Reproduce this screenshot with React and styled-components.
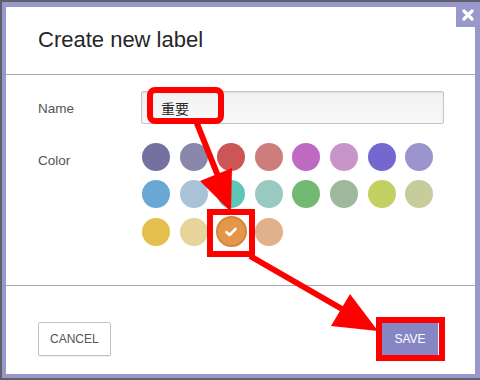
import React from "react";
import styled, { createGlobalStyle } from "styled-components";

const Global = createGlobalStyle`
  html, body { margin: 0; padding: 0; }
  body {
    background: #5f5f6c;
    font-family: "Liberation Sans", Arial, sans-serif;
    width: 480px;
    height: 380px;
    overflow: hidden;
  }
`;

const Page = styled.div`
  position: relative;
  width: 480px;
  height: 380px;
  padding-top: 2px;
  padding-left: 2px;
  box-sizing: border-box;
`;

const Frame = styled.div`
  position: relative;
  width: 478px;
  height: 376px;
  box-sizing: border-box;
  background: #9898cb;
  padding: 5px 5px 4px 4px;
`;

const Dialog = styled.div`
  background: #fff;
  height: 100%;
  display: flex;
  flex-direction: column;
`;

const CloseBox = styled.button`
  position: absolute;
  top: 0;
  right: 0;
  width: 24px;
  height: 25px;
  border: none;
  padding: 0;
  background: #9898cb;
  display: flex;
  align-items: center;
  justify-content: center;
`;

const Header = styled.div`
  height: 68px;
  display: flex;
  align-items: center;
  padding: 0 32px 2px;
  box-sizing: border-box;
  border-bottom: 1px solid #a9a9bd;
`;

const Title = styled.h2`
  margin: 0;
  font-size: 22px;
  font-weight: normal;
  color: #262626;
`;

const Body = styled.div`
  padding: 16px 31px 39px 32px;
  border-bottom: 1px solid #a9a9bd;
  display: flex;
  flex-direction: column;
  gap: 18.7px;
`;

const Row = styled.div`
  display: grid;
  grid-template-columns: 103px 1fr;
  align-items: ${(p) => (p.$top ? "start" : "center")};
`;

const Label = styled.label`
  font-size: 13.5px;
  color: #555;
  padding-top: ${(p) => p.$pad || 0}px;
`;

const Input = styled.div`
  height: 33px;
  box-sizing: border-box;
  border: 1px solid #c4c4d0;
  border-radius: 2px;
  background: linear-gradient(#f2f2f2, #f8f8f8);
  box-shadow: inset 0 1px 2px rgba(0, 0, 0, 0.08);
  display: flex;
  align-items: center;
  padding-left: 19px;
  font-family: "Noto Sans CJK JP", "Liberation Sans", sans-serif;
  font-size: 14px;
  color: #2a2a2a;
`;

const Swatches = styled.div`
  display: grid;
  grid-template-columns: repeat(8, 28px);
  column-gap: 9.6px;
  row-gap: 9.5px;
  margin-left: 1px;
`;

const Swatch = styled.div`
  width: 28px;
  height: 28px;
  border-radius: 50%;
  background: ${(p) => p.$c};
  display: flex;
  align-items: center;
  justify-content: center;
  box-sizing: border-box;
  ${(p) =>
    p.$sel &&
    `
    width: 31px;
    height: 31px;
    margin: -1.5px;
    border: 2px solid #cf8740;
  `}
`;

const Footer = styled.div`
  flex: 1;
  display: flex;
  justify-content: space-between;
  align-items: flex-start;
  padding: 36px 37px 0 32px;
`;

const Button = styled.button`
  height: 34px;
  box-sizing: border-box;
  padding: 0 ${(p) => (p.$primary ? 11.5 : 11)}px;
  font-family: "Liberation Sans", Arial, sans-serif;
  font-size: 12px;
  border-radius: 2px;
  border: 1px solid ${(p) => (p.$primary ? "#8686c4" : "#c2c2cc")};
  background: ${(p) => (p.$primary ? "#8686c4" : "#fff")};
  color: ${(p) => (p.$primary ? "#fff" : "#555")};
  box-shadow: ${(p) => (p.$primary ? "none" : "0 1px 1px rgba(0,0,0,0.08)")};
`;

const Overlay = styled.svg`
  position: absolute;
  top: 0;
  left: 0;
  pointer-events: none;
`;

const colors = [
  "#7471a1", "#8988aa", "#cc5656", "#cf7c7c", "#be6ac2", "#c795c8", "#7468cf", "#9c94cd",
  "#69a8d4", "#a8c3d8", "#5fc5b6", "#99c9c1", "#73b974", "#9eb89e", "#c3d063", "#c6cc9b",
  "#e4bf4e", "#e6d49a", "#e4964b", "#e0b18a",
];

export default function App() {
  return (
    <>
      <Global />
      <Page>
        <Frame>
          <Dialog>
            <Header>
              <Title>Create new label</Title>
            </Header>
            <Body>
              <Row>
                <Label $pad={2}>Name</Label>
                <Input>重要</Input>
              </Row>
              <Row $top>
                <Label $pad={10}>Color</Label>
                <Swatches>
                  {colors.map((c, i) => (
                    <Swatch key={i} $c={c} $sel={i === 18}>
                      {i === 18 && (
                        <svg width="12" height="10" viewBox="0 0 12 10">
                          <path
                            d="M1.5 5.2 L4.6 8 L10.5 2"
                            fill="none"
                            stroke="#fff"
                            strokeWidth="2.6"
                            strokeLinecap="round"
                            strokeLinejoin="round"
                          />
                        </svg>
                      )}
                    </Swatch>
                  ))}
                </Swatches>
              </Row>
            </Body>
            <Footer>
              <Button>CANCEL</Button>
              <Button $primary>SAVE</Button>
            </Footer>
          </Dialog>
          <CloseBox aria-label="close">
            <svg width="12" height="12" viewBox="0 0 12 12">
              <path d="M2 2 L10 10 M10 2 L2 10" stroke="#fff" strokeWidth="3.2" strokeLinecap="round" />
            </svg>
          </CloseBox>
        </Frame>
        <Overlay width="480" height="380" viewBox="0 0 480 380">
          <rect x="150" y="90" width="71" height="31" rx="5" fill="none" stroke="#f00" strokeWidth="6" />
          <line x1="196" y1="121" x2="218" y2="176" stroke="#f00" strokeWidth="6" />
          <polygon points="231,212 200,181 232,168" fill="#f00" />
          <rect x="210" y="212" width="42" height="42" fill="none" stroke="#f00" strokeWidth="6" />
          <line x1="250" y1="256" x2="342" y2="309" stroke="#f00" strokeWidth="6" />
          <polygon points="378,331 331,326 350,294" fill="#f00" />
          <rect x="379" y="320" width="63" height="38" fill="none" stroke="#f00" strokeWidth="6" />
        </Overlay>
      </Page>
    </>
  );
}
